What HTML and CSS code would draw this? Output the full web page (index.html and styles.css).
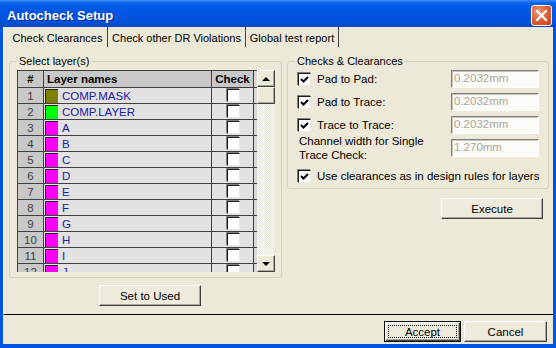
FILE: index.html
```html
<!DOCTYPE html>
<html lang="en">
<head>
  <meta charset="UTF-8">
  <title>Autocheck Setup</title>
  <link rel="stylesheet" href="styles.css">
</head>
<body>

  <div class="window">
    <div class="titlebar">
      <span class="title">Autocheck Setup</span>
      <button class="close" aria-label="Close">
        <svg width="13" height="13" viewBox="0 0 13 13"><path d="M2 2 L11 11 M11 2 L2 11" stroke="#fff" stroke-width="2.2" stroke-linecap="square"/></svg>
      </button>
    </div>

    <div class="client">
      <div class="tabs">
        <div class="tab tab-1 active">Check Clearances</div>
        <div class="tab tab-2">Check other DR Violations</div>
        <div class="tab tab-3">Global test report</div>
      </div>

      <div class="panel">
        <div class="col-left">
          <fieldset class="group layers">
            <legend>Select layer(s)</legend>
            <div class="grid-wrap">
              <div class="grid">
                <div class="row head">
                  <div class="cell c-num">#</div>
                  <div class="cell c-name">Layer names</div>
                  <div class="cell c-check">Check</div>
                </div>
                <div class="row"><div class="cell c-num">1</div><div class="cell c-name"><span class="swatch olive"></span>COMP.MASK</div><div class="cell c-check"><span class="box"></span></div></div>
                <div class="row"><div class="cell c-num">2</div><div class="cell c-name"><span class="swatch green"></span>COMP.LAYER</div><div class="cell c-check"><span class="box"></span></div></div>
                <div class="row"><div class="cell c-num">3</div><div class="cell c-name"><span class="swatch"></span>A</div><div class="cell c-check"><span class="box"></span></div></div>
                <div class="row"><div class="cell c-num">4</div><div class="cell c-name"><span class="swatch"></span>B</div><div class="cell c-check"><span class="box"></span></div></div>
                <div class="row"><div class="cell c-num">5</div><div class="cell c-name"><span class="swatch"></span>C</div><div class="cell c-check"><span class="box"></span></div></div>
                <div class="row"><div class="cell c-num">6</div><div class="cell c-name"><span class="swatch"></span>D</div><div class="cell c-check"><span class="box"></span></div></div>
                <div class="row"><div class="cell c-num">7</div><div class="cell c-name"><span class="swatch"></span>E</div><div class="cell c-check"><span class="box"></span></div></div>
                <div class="row"><div class="cell c-num">8</div><div class="cell c-name"><span class="swatch"></span>F</div><div class="cell c-check"><span class="box"></span></div></div>
                <div class="row"><div class="cell c-num">9</div><div class="cell c-name"><span class="swatch"></span>G</div><div class="cell c-check"><span class="box"></span></div></div>
                <div class="row"><div class="cell c-num">10</div><div class="cell c-name"><span class="swatch"></span>H</div><div class="cell c-check"><span class="box"></span></div></div>
                <div class="row"><div class="cell c-num">11</div><div class="cell c-name"><span class="swatch"></span>I</div><div class="cell c-check"><span class="box"></span></div></div>
                <div class="row"><div class="cell c-num">12</div><div class="cell c-name"><span class="swatch"></span>J</div><div class="cell c-check"><span class="box"></span></div></div>
              </div>
              <div class="scrollbar">
                <div class="sb-btn"><span class="arrow up"></span></div>
                <div class="sb-btn thumb"></div>
                <div class="sb-track"></div>
                <div class="sb-btn"><span class="arrow down"></span></div>
              </div>
            </div>
          </fieldset>
          <div class="btn-row used-row">
            <button class="btn used">Set to Used</button>
          </div>
        </div>

        <div class="col-right">
          <fieldset class="group checks">
            <legend>Checks &amp; Clearances</legend>
            <div class="opt r1">
              <label><span class="chk checked"><svg width="9" height="9" viewBox="0 0 9 9"><path d="M1 4 L3.5 6.5 L8 2" stroke="#000" stroke-width="2" fill="none"/></svg></span>Pad to Pad:</label>
              <span class="field">0.2032mm</span>
            </div>
            <div class="opt r2">
              <label><span class="chk checked"><svg width="9" height="9" viewBox="0 0 9 9"><path d="M1 4 L3.5 6.5 L8 2" stroke="#000" stroke-width="2" fill="none"/></svg></span>Pad to Trace:</label>
              <span class="field">0.2032mm</span>
            </div>
            <div class="opt r3">
              <label><span class="chk checked"><svg width="9" height="9" viewBox="0 0 9 9"><path d="M1 4 L3.5 6.5 L8 2" stroke="#000" stroke-width="2" fill="none"/></svg></span>Trace to Trace:</label>
              <span class="field">0.2032mm</span>
            </div>
            <div class="opt r4">
              <span class="plain">Channel width for Single<br>Trace Check:</span>
              <span class="field">1.270mm</span>
            </div>
            <div class="opt r5">
              <label><span class="chk checked"><svg width="9" height="9" viewBox="0 0 9 9"><path d="M1 4 L3.5 6.5 L8 2" stroke="#000" stroke-width="2" fill="none"/></svg></span>Use clearances as in design rules for layers</label>
            </div>
          </fieldset>
          <div class="btn-row exec-row">
            <button class="btn exec">Execute</button>
          </div>
        </div>
      </div>

      <div class="footer">
        <button class="btn default accept">Accept</button>
        <button class="btn cancel">Cancel</button>
      </div>
    </div>
  </div>

</body>
</html>
```

FILE: styles.css
```css
:root {
  --cor-fundo: #ECE9D8;
  --cor-azul: #0054E3;
  --cor-linha: #404040;
  --cor-cinza: #C8C8C8;
  --cor-celula: #E2E2E2;
}

* {
  box-sizing: border-box;
}

html, body {
  margin: 0;
  padding: 0;
}

body {
  font-family: "Liberation Sans", Arial, sans-serif;
  font-size: 11px;
  color: #000;
  background-color: var(--cor-fundo);
}

.window {
  width: 556px;
  height: 348px;
  background-color: var(--cor-azul);
  display: flex;
  flex-direction: column;
}

/* barra de título */
.titlebar {
  height: 27px;
  flex: none;
  display: flex;
  align-items: flex-start;
  justify-content: space-between;
  padding: 0 4px 0 7px;
  background: linear-gradient(to bottom, #3B8CF5 0, #0A62E9 3px, #0058E6 7px, #0355E2 50%, #0351D8 85%, #0246C8 100%);
}

.title {
  color: #fff;
  font-weight: bold;
  font-size: 13px;
  margin-top: 8px;
  text-shadow: 1px 1px #0A2A8F;
}

.close {
  width: 21px;
  height: 21px;
  margin-top: 5px;
  padding: 0;
  border: 1px solid #fff;
  border-radius: 3px;
  background: radial-gradient(circle at 35% 30%, #F19A78 0, #E2623B 45%, #C94019 100%);
  display: flex;
  align-items: center;
  justify-content: center;
}

.client {
  flex: 1;
  margin: 0 3px 4px;
  background-color: var(--cor-fundo);
  display: flex;
  flex-direction: column;
}

/* abas */
.tabs {
  display: flex;
  height: 20px;
  flex: none;
}

.tab {
  height: 20px;
  display: flex;
  align-items: center;
  justify-content: center;
  padding-top: 2px;
  font-size: 11px;
  border-right: 1px solid var(--cor-linha);
}

.tab-1 { width: 105px; padding-left: 4px; }
.tab-2 { width: 138px; }
.tab-3 { width: 93px; }

.tab.active {
  border-left: 1px solid #fff;
}

.panel {
  height: 268px;
  flex: none;
  display: flex;
  gap: 5px;
  padding: 7px 4px 0 5px;
  border-left: 1px solid #fff;
  border-bottom: 1px solid #000;
}

.col-left {
  width: 273px;
  display: flex;
  flex-direction: column;
}

.col-right {
  width: 262px;
  display: flex;
  flex-direction: column;
}

fieldset.group {
  margin: 0;
  min-width: 0;
  border: 1px solid #D0D0BF;
  border-radius: 3px;
}

legend {
  padding: 0 2px;
  line-height: 14px;
}

.layers {
  padding: 2px 6px 5px 7px;
}

/* grade de camadas */
.grid-wrap {
  display: flex;
  height: 202px;
}

.grid {
  width: 240px;
  height: 202px;
  overflow: hidden;
  background-color: #D8D8D8;
  border-left: 1px solid var(--cor-linha);
  border-top: 1px solid var(--cor-linha);
}

.row {
  display: flex;
  height: 16px;
  border-bottom: 1px solid var(--cor-linha);
}

.row.head {
  height: 17px;
  font-weight: bold;
  font-size: 11.5px;
}

.cell {
  height: 100%;
  display: flex;
  align-items: center;
  border-right: 1px solid var(--cor-linha);
}

.c-num {
  width: 26px;
  justify-content: center;
  background-color: var(--cor-cinza);
  color: #404040;
  font-size: 11.5px;
}

.c-name {
  width: 168px;
  background-color: var(--cor-celula);
  color: #1A1AA8;
  font-size: 11.5px;
}

.c-check {
  width: 42px;
  justify-content: center;
  background-color: var(--cor-celula);
}

.head .c-num,
.head .c-name,
.head .c-check {
  background-color: var(--cor-cinza);
  color: #000;
}

.head .c-name {
  padding-left: 3px;
}

.swatch {
  width: 13px;
  height: 14px;
  margin: 0 4px 0 1px;
  background-color: #FF00FF;
  border-left: 1px solid #222;
  border-top: 1px solid #222;
}

.swatch.olive { background-color: #808000; }
.swatch.green { background-color: #00FF00; }

.box {
  width: 13px;
  height: 13px;
  margin-left: 1px;
  background-color: #fff;
  border: 1px solid;
  border-color: #1A1A1A #E8E8E8 #E8E8E8 #1A1A1A;
  box-shadow: -1px -1px 0 #808080;
}

/* barra de rolagem */
.scrollbar {
  width: 18px;
  height: 202px;
  display: flex;
  flex-direction: column;
  background-color: #fff;
  background-image: conic-gradient(#E6E3D2 25%, #fff 0 50%, #E6E3D2 0 75%, #fff 0);
  background-size: 2px 2px;
}

.sb-btn {
  height: 17px;
  flex: none;
  display: flex;
  align-items: center;
  justify-content: center;
  background-color: var(--cor-fundo);
  border: 1px solid;
  border-color: #fff #404040 #404040 #fff;
  box-shadow: inset -1px -1px 0 #ACA899;
}

.sb-track {
  flex: 1;
}

.arrow {
  width: 0;
  height: 0;
  border-left: 4px solid transparent;
  border-right: 4px solid transparent;
}

.arrow.up { border-bottom: 4px solid #000; }
.arrow.down { border-top: 4px solid #000; }

/* botões */
.btn {
  height: 21px;
  padding: 0;
  font-family: inherit;
  font-size: 11.5px;
  color: #000;
  background-color: #EEEBDD;
  border: 1px solid;
  border-color: #fff #404040 #404040 #fff;
  box-shadow: inset -1px -1px 0 #ACA899;
}

.used-row {
  display: flex;
  padding: 7px 0 0 90px;
}

.used { width: 102px; }

.exec-row {
  display: flex;
  justify-content: flex-end;
  padding: 9px 6px 0 0;
}

.exec { width: 102px; }

.footer {
  flex: 1;
  display: flex;
  justify-content: flex-end;
  align-items: flex-start;
  gap: 3px;
  padding: 6px 6px 0 0;
}

.accept { width: 77px; }
.cancel { width: 83px; }

.btn.default {
  border: 1px solid #000;
  box-shadow: inset 1px 1px 0 #fff, inset -1px -1px 0 #404040, inset -2px -2px 0 #ACA899;
  outline: 1px dotted #000;
  outline-offset: -5px;
}

/* grupo de verificações */
.checks {
  padding: 2px 9px 2px 7px;
}

.opt {
  display: flex;
  align-items: center;
  justify-content: space-between;
  height: 18px;
}

.r1, .r2 { margin-bottom: 5px; }
.r4 { height: 28px; margin-bottom: 4px; }
.r5 { height: 20px; }

.opt label {
  display: flex;
  align-items: center;
  white-space: nowrap;
  font-size: 11.5px;
}

.plain {
  margin-left: 4px;
  font-size: 11.5px;
  line-height: 14px;
}

.chk {
  width: 13px;
  height: 13px;
  margin: 0 6px 0 3px;
  display: flex;
  align-items: center;
  justify-content: center;
  background-color: #fff;
  border: 1px solid;
  border-color: #1A1A1A #E8E8E8 #E8E8E8 #1A1A1A;
  box-shadow: -1px -1px 0 #808080;
}

.field {
  width: 88px;
  height: 18px;
  padding: 1px 0 0 2px;
  color: #ACA899;
  font-size: 11.5px;
  background-color: #FAFAF6;
  border: 1px solid;
  border-color: #808080 #fff #fff #808080;
  box-shadow: inset 1px 1px 0 #C8C5B8;
}
```
